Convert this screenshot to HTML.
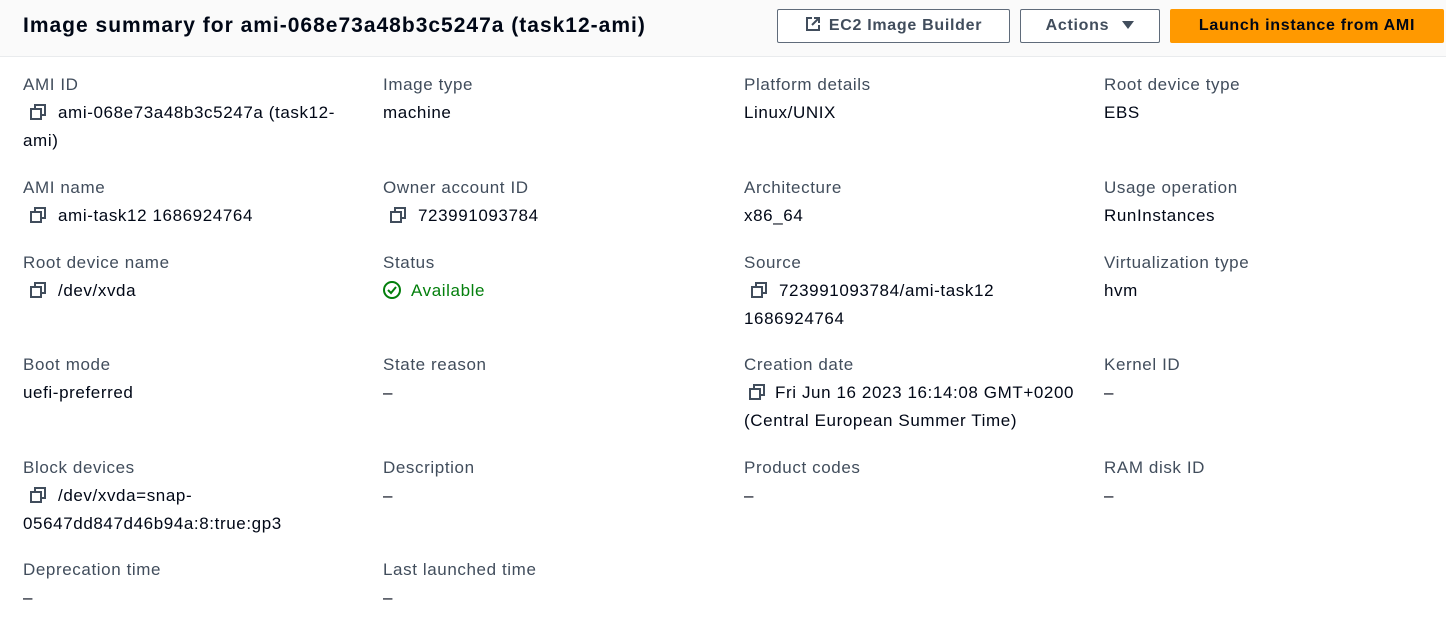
<!DOCTYPE html>
<html><head><meta charset="utf-8"><style>
*{margin:0;padding:0;box-sizing:border-box}
body{width:1446px;height:643px;background:#fff;font-family:"Liberation Sans",sans-serif;color:#000716;position:relative;overflow:hidden}
.hdr{position:absolute;left:0;top:0;width:1446px;height:57px;background:#fafafa;border-bottom:1px solid #e9ebed}
.title{position:absolute;left:23px;top:12px;font-size:21px;font-weight:bold;color:#000716;letter-spacing:1px;line-height:28px}
.btn{position:absolute;top:9px;height:34px;border:1px solid #5f6b7a;border-radius:2px;background:#fff;font-size:16px;font-weight:bold;color:#414d5c;line-height:32px;text-align:center;letter-spacing:0.7px}
.c{position:absolute;font-size:17px;line-height:28px;letter-spacing:0.6px;white-space:nowrap}
.l{color:#414d5c}
.v{color:#000716}
.cp{display:inline-block;width:16px;height:16px;vertical-align:-2px;margin:0 12px 0 7px}
.ok{color:#037f0c}
</style></head><body>
<div class="hdr">
<div class="title">Image summary for ami-068e73a48b3c5247a (task12-ami)</div>
<div class="btn" style="left:777px;width:233px"><svg width="16" height="16" viewBox="0 0 16 16" style="vertical-align:-2px;margin-right:8px" fill="none" stroke="#414d5c" stroke-width="2"><path d="M7 2H2v12h12V9"/><path d="M9 2h5v5M14 2L7 9"/></svg>EC2 Image Builder</div>
<div class="btn" style="left:1020px;width:140px">Actions <svg width="12" height="10" viewBox="0 0 12 10" style="margin-left:8px"><path d="M0 1h12L6 9z" fill="#414d5c"/></svg></div>
<div class="btn" style="left:1170px;width:274px;background:#ff9900;border-color:#ff9900;color:#000716">Launch instance from AMI</div>
</div>
<svg width="0" height="0" style="position:absolute"><defs><g id="cpi" fill="none" stroke="#414d5c" stroke-width="2"><rect x="1" y="5" width="10" height="10"/><path d="M5 5V1h10v10h-4"/></g></defs></svg>

<div class="c l" style="left:23px;top:71px">AMI ID</div>
<div class="c v" style="left:23px;top:99px"><svg class="cp" viewBox="0 0 16 16"><use href="#cpi"/></svg>ami-068e73a48b3c5247a (task12-<br>ami)</div>
<div class="c l" style="left:383px;top:71px">Image type</div>
<div class="c v" style="left:383px;top:99px">machine</div>
<div class="c l" style="left:744px;top:71px">Platform details</div>
<div class="c v" style="left:744px;top:99px">Linux/UNIX</div>
<div class="c l" style="left:1104px;top:71px">Root device type</div>
<div class="c v" style="left:1104px;top:99px">EBS</div>

<div class="c l" style="left:23px;top:174px">AMI name</div>
<div class="c v" style="left:23px;top:202px"><svg class="cp" viewBox="0 0 16 16"><use href="#cpi"/></svg>ami-task12 1686924764</div>
<div class="c l" style="left:383px;top:174px">Owner account ID</div>
<div class="c v" style="left:383px;top:202px"><svg class="cp" viewBox="0 0 16 16"><use href="#cpi"/></svg>723991093784</div>
<div class="c l" style="left:744px;top:174px">Architecture</div>
<div class="c v" style="left:744px;top:202px">x86_64</div>
<div class="c l" style="left:1104px;top:174px">Usage operation</div>
<div class="c v" style="left:1104px;top:202px">RunInstances</div>

<div class="c l" style="left:23px;top:249px">Root device name</div>
<div class="c v" style="left:23px;top:277px"><svg class="cp" viewBox="0 0 16 16"><use href="#cpi"/></svg>/dev/xvda</div>
<div class="c l" style="left:383px;top:249px">Status</div>
<div class="c ok" style="left:383px;top:277px"><svg width="18" height="18" viewBox="0 0 18 18" style="vertical-align:-3px;margin-right:10px" fill="none" stroke="#037f0c" stroke-width="2"><circle cx="9" cy="9" r="8"/><path d="M5 9l3 3 5-6"/></svg>Available</div>
<div class="c l" style="left:744px;top:249px">Source</div>
<div class="c v" style="left:744px;top:277px"><svg class="cp" viewBox="0 0 16 16"><use href="#cpi"/></svg>723991093784/ami-task12<br>1686924764</div>
<div class="c l" style="left:1104px;top:249px">Virtualization type</div>
<div class="c v" style="left:1104px;top:277px">hvm</div>

<div class="c l" style="left:23px;top:351px">Boot mode</div>
<div class="c v" style="left:23px;top:379px">uefi-preferred</div>
<div class="c l" style="left:383px;top:351px">State reason</div>
<div class="c v" style="left:383px;top:379px">–</div>
<div class="c l" style="left:744px;top:351px">Creation date</div>
<div class="c v" style="left:744px;top:379px"><svg class="cp" viewBox="0 0 16 16" style="margin-left:5px;margin-right:10px"><use href="#cpi"/></svg>Fri Jun 16 2023 16:14:08 GMT+0200<br>(Central European Summer Time)</div>
<div class="c l" style="left:1104px;top:351px">Kernel ID</div>
<div class="c v" style="left:1104px;top:379px">–</div>

<div class="c l" style="left:23px;top:454px">Block devices</div>
<div class="c v" style="left:23px;top:482px"><svg class="cp" viewBox="0 0 16 16"><use href="#cpi"/></svg>/dev/xvda=snap-<br>05647dd847d46b94a:8:true:gp3</div>
<div class="c l" style="left:383px;top:454px">Description</div>
<div class="c v" style="left:383px;top:482px">–</div>
<div class="c l" style="left:744px;top:454px">Product codes</div>
<div class="c v" style="left:744px;top:482px">–</div>
<div class="c l" style="left:1104px;top:454px">RAM disk ID</div>
<div class="c v" style="left:1104px;top:482px">–</div>

<div class="c l" style="left:23px;top:556px">Deprecation time</div>
<div class="c v" style="left:23px;top:584px">–</div>
<div class="c l" style="left:383px;top:556px">Last launched time</div>
<div class="c v" style="left:383px;top:584px">–</div>
</body></html>
